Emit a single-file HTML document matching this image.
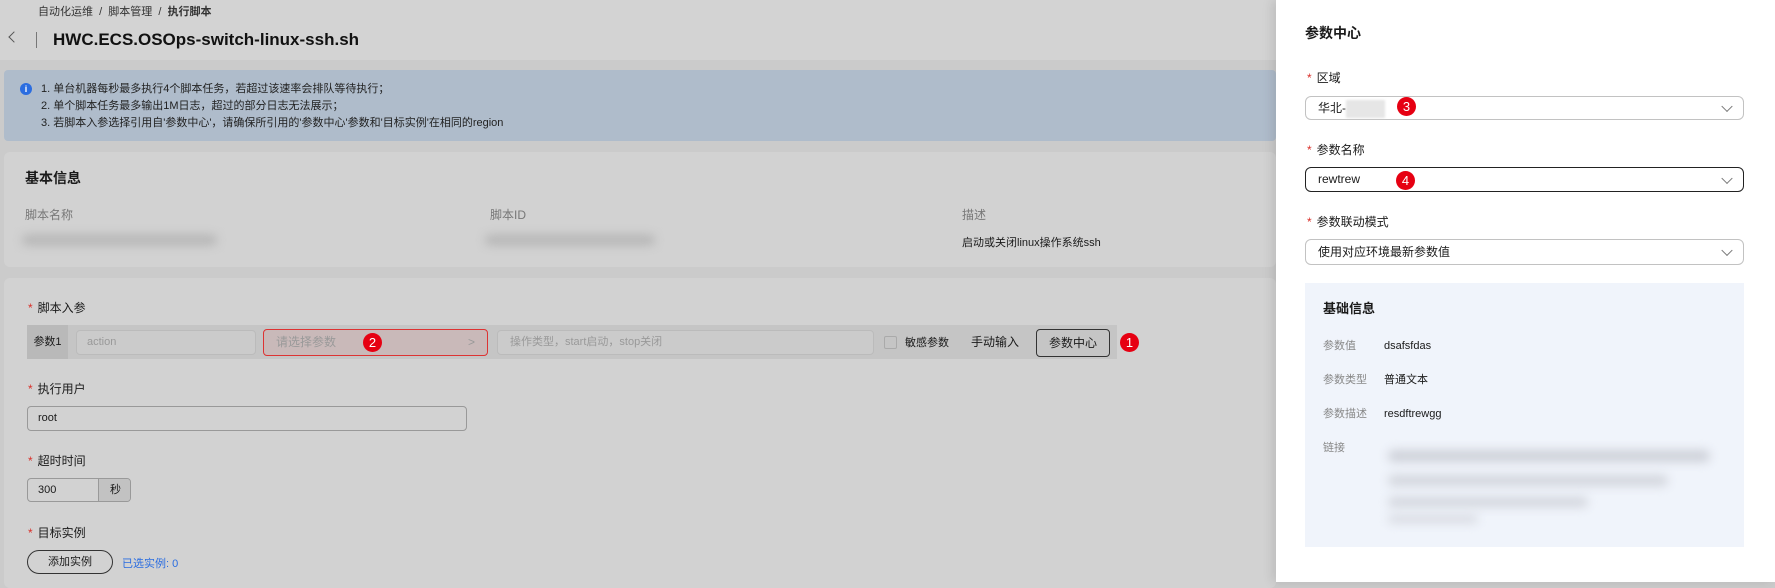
<!DOCTYPE html>
<html><head><meta charset="utf-8"><style>
*{box-sizing:border-box;margin:0;padding:0}
body{width:1775px;height:582px;overflow:hidden;position:relative;background:#cbcbcb;font-family:"Liberation Sans","Noto Sans CJK SC",sans-serif;font-size:12px;color:#1a1a1a;line-height:16px}
.a{position:absolute;white-space:nowrap}
.star{color:#d9302a;margin-right:5px}
.blur{position:absolute;background:#b4b4b4;filter:blur(5px);border-radius:6px}
.sel{position:absolute;left:1305px;width:439px;border:1px solid #c2c2c2;border-radius:6px;background:#fff;padding-left:12px;font-size:12px}
.chev{position:absolute;right:12px;top:50%;width:8px;height:8px;border-right:1.3px solid #777;border-bottom:1.3px solid #777;transform:translateY(-70%) rotate(45deg)}
.badge{position:absolute;width:19px;height:19px;border-radius:50%;background:#e60012;color:#fff;font-size:13px;text-align:center;line-height:19px}
</style></head><body>
<div class="a" style="left:0;top:0;width:1276px;height:60px;background:#d3d3d3"></div>
<div class="a" style="left:38px;top:4px;font-size:11px;color:#333">自动化运维 &nbsp;/&nbsp; 脚本管理 &nbsp;/&nbsp; <b>执行脚本</b></div>
<div class="a" style="left:10px;top:33px;width:8px;height:8px;border-left:1.5px solid #555;border-bottom:1.5px solid #555;transform:rotate(45deg)"></div>
<div class="a" style="left:36px;top:32px;width:1px;height:16px;background:#777"></div>
<div class="a" style="left:53px;top:30px;font-size:17px;line-height:20px;font-weight:bold;color:#111">HWC.ECS.OSOps-switch-linux-ssh.sh</div>

<div class="a" style="left:4px;top:70px;width:1272px;height:71px;background:#afbccb;border-radius:4px"></div>
<div class="a" style="left:20px;top:83px;width:12px;height:12px;border-radius:50%;background:#2b6de0;color:#fff;font-size:9px;font-weight:bold;text-align:center;line-height:12px">i</div>
<div class="a" style="left:41px;top:81px;font-size:11px;line-height:17px;color:#222">1. 单台机器每秒最多执行4个脚本任务，若超过该速率会排队等待执行；<br>2. 单个脚本任务最多输出1M日志，超过的部分日志无法展示；<br>3. 若脚本入参选择引用自'参数中心'，请确保所引用的'参数中心'参数和'目标实例'在相同的region</div>

<div class="a" style="left:4px;top:152px;width:1272px;height:115px;background:#d2d2d2;border-radius:6px"></div>
<div class="a" style="left:25px;top:170px;font-size:14px;font-weight:bold">基本信息</div>
<div class="a" style="left:25px;top:207px;color:#777">脚本名称</div>
<div class="a" style="left:490px;top:207px;color:#777">脚本ID</div>
<div class="a" style="left:962px;top:207px;color:#777">描述</div>
<div class="blur" style="left:22px;top:235px;width:195px;height:10px"></div>
<div class="blur" style="left:485px;top:235px;width:170px;height:10px"></div>
<div class="a" style="left:962px;top:235px;font-size:11px">启动或关闭linux操作系统ssh</div>

<div class="a" style="left:4px;top:278px;width:1272px;height:310px;background:#d2d2d2;border-radius:6px"></div>
<div class="a" style="left:28px;top:300px"><span class="star">*</span>脚本入参</div>
<div class="a" style="left:27px;top:325px;width:1090px;height:34px;background:#c5c5c5"></div>
<div class="a" style="left:27px;top:325px;width:41px;height:34px;background:#b9b9b9;font-size:11px;line-height:34px;text-align:center">参数1</div>
<div class="a" style="left:76px;top:330px;width:180px;height:25px;border:1px solid #bbb;border-radius:4px;background:#cbcbcb;color:#999;font-size:11px;line-height:23px;padding-left:10px">action</div>
<div class="a" style="left:263px;top:329px;width:225px;height:27px;border:1px solid #d33;border-radius:4px;background:#c9b9b9;color:#999;font-size:12px;line-height:25px;padding-left:12px">请选择参数<span style="position:absolute;right:12px">&gt;</span></div>
<div class="badge" style="left:363px;top:333px">2</div>
<div class="a" style="left:497px;top:330px;width:377px;height:25px;border:1px solid #bbb;border-radius:4px;background:#cbcbcb;color:#999;font-size:11px;line-height:23px;padding-left:12px">操作类型，start启动，stop关闭</div>
<div class="a" style="left:884px;top:336px;width:13px;height:13px;border:1px solid #aaa;border-radius:2px"></div>
<div class="a" style="left:905px;top:335px;font-size:11px">敏感参数</div>
<div class="a" style="left:971px;top:334px;font-size:12px">手动输入</div>
<div class="a" style="left:1036px;top:329px;width:74px;height:28px;border:1px solid #333;border-radius:4px;text-align:center;line-height:26px;font-size:12px">参数中心</div>
<div class="badge" style="left:1120px;top:333px">1</div>

<div class="a" style="left:28px;top:381px"><span class="star">*</span>执行用户</div>
<div class="a" style="left:27px;top:406px;width:440px;height:25px;border:1px solid #999;border-radius:4px;line-height:23px;padding-left:10px;font-size:11px">root</div>
<div class="a" style="left:28px;top:453px"><span class="star">*</span>超时时间</div>
<div class="a" style="left:27px;top:478px;width:104px;height:24px;border:1px solid #999;border-radius:4px;line-height:22px;padding-left:10px;font-size:11px;overflow:hidden">300<span style="position:absolute;left:70px;top:0;width:34px;height:24px;background:#c2c2c2;border-left:1px solid #999;text-align:center">秒</span></div>
<div class="a" style="left:28px;top:525px"><span class="star">*</span>目标实例</div>
<div class="a" style="left:27px;top:550px;width:86px;height:24px;border:1px solid #333;border-radius:12px;text-align:center;line-height:22px;font-size:11px">添加实例</div>
<div class="a" style="left:122px;top:556px;color:#2b6de0;font-size:11px">已选实例: 0</div>

<div class="a" style="left:1276px;top:0;width:499px;height:582px;background:#fff;box-shadow:-4px 0 10px rgba(0,0,0,.1)"></div>
<div class="a" style="left:1305px;top:25px;font-size:14px;font-weight:bold">参数中心</div>
<div class="a" style="left:1307px;top:70px"><span class="star">*</span>区域</div>
<div class="sel" style="top:96px;height:24px;line-height:22px">华北-<span style="display:inline-block;width:39px;height:18px;background:#e6e6e6;vertical-align:middle;filter:blur(1px)"></span><div class="chev"></div></div>
<div class="badge" style="left:1397px;top:97px">3</div>
<div class="a" style="left:1307px;top:142px"><span class="star">*</span>参数名称</div>
<div class="sel" style="top:167px;height:25px;line-height:23px;border-color:#222">rewtrew<div class="chev"></div></div>
<div class="badge" style="left:1396px;top:171px">4</div>
<div class="a" style="left:1307px;top:214px"><span class="star">*</span>参数联动模式</div>
<div class="sel" style="top:239px;height:26px;line-height:24px">使用对应环境最新参数值<div class="chev"></div></div>

<div class="a" style="left:1305px;top:283px;width:439px;height:264px;background:#f0f4fb"></div>
<div class="a" style="left:1323px;top:301px;font-size:13px;font-weight:bold">基础信息</div>
<div class="a" style="left:1323px;top:338px;color:#888;font-size:11px">参数值</div>
<div class="a" style="left:1384px;top:338px;font-size:11px">dsafsfdas</div>
<div class="a" style="left:1323px;top:372px;color:#888;font-size:11px">参数类型</div>
<div class="a" style="left:1384px;top:372px;font-size:11px">普通文本</div>
<div class="a" style="left:1323px;top:406px;color:#888;font-size:11px">参数描述</div>
<div class="a" style="left:1384px;top:406px;font-size:11px">resdftrewgg</div>
<div class="a" style="left:1323px;top:440px;color:#888;font-size:11px">链接</div>
<div class="blur" style="left:1388px;top:450px;width:322px;height:12px;background:#cdd0d8"></div>
<div class="blur" style="left:1388px;top:475px;width:280px;height:11px;background:#d2d5dc"></div>
<div class="blur" style="left:1388px;top:497px;width:200px;height:10px;background:#d2d5dc"></div>
<div class="blur" style="left:1388px;top:515px;width:90px;height:8px;background:#d6d9e0"></div>
</body></html>
